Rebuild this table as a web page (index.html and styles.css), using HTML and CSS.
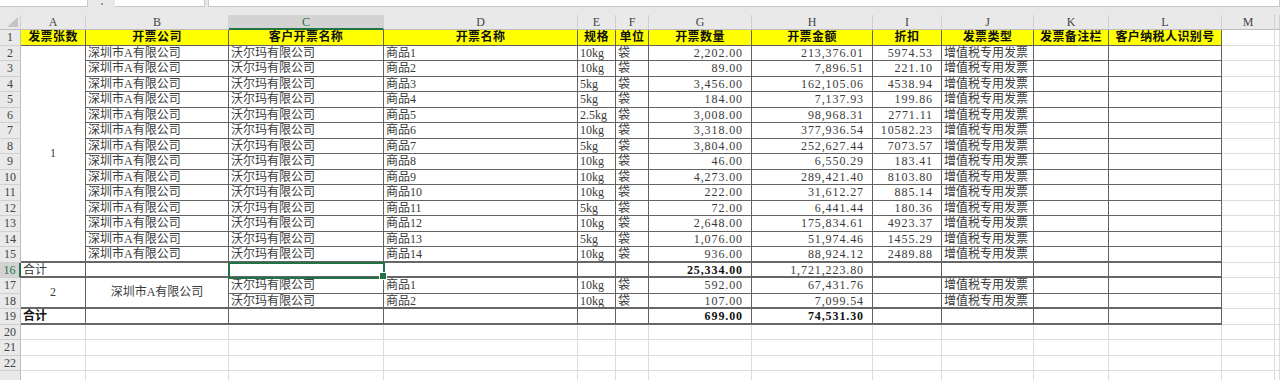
FILE: index.html
```html
<!DOCTYPE html>
<html lang="zh-CN">
<head>
<meta charset="utf-8">
<title>发票</title>
<link rel="stylesheet" href="styles.css">
</head>
<body>
<div class="topbar">
  <div class="box namebox"></div>
  <div class="sep"><span class="dot"></span></div>
  <div class="box fxbox"></div>
  <div class="box formula"></div>
</div>
<div class="sheet">
  <!-- column headers -->
  <div class="h corner"><span class="tri"></span></div>
  <div class="h">A</div><div class="h">B</div><div class="h hs">C</div><div class="h">D</div><div class="h">E</div><div class="h">F</div><div class="h">G</div><div class="h">H</div><div class="h">I</div><div class="h">J</div><div class="h">K</div><div class="h">L</div><div class="h">M</div><div class="h"></div>

  <!-- row 1 -->
  <div class="rh">1</div>
  <div class="c t y">发票张数</div><div class="c t y">开票公司</div><div class="c t y">客户开票名称</div><div class="c t y">开票名称</div><div class="c t y">规格</div><div class="c t y">单位</div><div class="c t y">开票数量</div><div class="c t y">开票金额</div><div class="c t y">折扣</div><div class="c t y">发票类型</div><div class="c t y">发票备注栏</div><div class="c t y">客户纳税人识别号</div><div class="c"></div><div class="c"></div>

  <!-- row 2 -->
  <div class="rh">2</div>
  <div class="c t m1 ctr tk">1</div>
  <div class="c t">深圳市A有限公司</div><div class="c t">沃尔玛有限公司</div><div class="c t">商品1</div><div class="c t">10kg</div><div class="c t">袋</div><div class="c t n">2,202.00</div><div class="c t n">213,376.01</div><div class="c t n">5974.53</div><div class="c t">增值税专用发票</div><div class="c t"></div><div class="c t"></div><div class="c"></div><div class="c"></div>

  <div class="rh">3</div>
  <div class="c t">深圳市A有限公司</div><div class="c t">沃尔玛有限公司</div><div class="c t">商品2</div><div class="c t">10kg</div><div class="c t">袋</div><div class="c t n">89.00</div><div class="c t n">7,896.51</div><div class="c t n">221.10</div><div class="c t">增值税专用发票</div><div class="c t"></div><div class="c t"></div><div class="c"></div><div class="c"></div>

  <div class="rh">4</div>
  <div class="c t">深圳市A有限公司</div><div class="c t">沃尔玛有限公司</div><div class="c t">商品3</div><div class="c t">5kg</div><div class="c t">袋</div><div class="c t n">3,456.00</div><div class="c t n">162,105.06</div><div class="c t n">4538.94</div><div class="c t">增值税专用发票</div><div class="c t"></div><div class="c t"></div><div class="c"></div><div class="c"></div>

  <div class="rh">5</div>
  <div class="c t">深圳市A有限公司</div><div class="c t">沃尔玛有限公司</div><div class="c t">商品4</div><div class="c t">5kg</div><div class="c t">袋</div><div class="c t n">184.00</div><div class="c t n">7,137.93</div><div class="c t n">199.86</div><div class="c t">增值税专用发票</div><div class="c t"></div><div class="c t"></div><div class="c"></div><div class="c"></div>

  <div class="rh">6</div>
  <div class="c t">深圳市A有限公司</div><div class="c t">沃尔玛有限公司</div><div class="c t">商品5</div><div class="c t">2.5kg</div><div class="c t">袋</div><div class="c t n">3,008.00</div><div class="c t n">98,968.31</div><div class="c t n">2771.11</div><div class="c t">增值税专用发票</div><div class="c t"></div><div class="c t"></div><div class="c"></div><div class="c"></div>

  <div class="rh">7</div>
  <div class="c t">深圳市A有限公司</div><div class="c t">沃尔玛有限公司</div><div class="c t">商品6</div><div class="c t">10kg</div><div class="c t">袋</div><div class="c t n">3,318.00</div><div class="c t n">377,936.54</div><div class="c t n">10582.23</div><div class="c t">增值税专用发票</div><div class="c t"></div><div class="c t"></div><div class="c"></div><div class="c"></div>

  <div class="rh">8</div>
  <div class="c t">深圳市A有限公司</div><div class="c t">沃尔玛有限公司</div><div class="c t">商品7</div><div class="c t">5kg</div><div class="c t">袋</div><div class="c t n">3,804.00</div><div class="c t n">252,627.44</div><div class="c t n">7073.57</div><div class="c t">增值税专用发票</div><div class="c t"></div><div class="c t"></div><div class="c"></div><div class="c"></div>

  <div class="rh">9</div>
  <div class="c t">深圳市A有限公司</div><div class="c t">沃尔玛有限公司</div><div class="c t">商品8</div><div class="c t">10kg</div><div class="c t">袋</div><div class="c t n">46.00</div><div class="c t n">6,550.29</div><div class="c t n">183.41</div><div class="c t">增值税专用发票</div><div class="c t"></div><div class="c t"></div><div class="c"></div><div class="c"></div>

  <div class="rh">10</div>
  <div class="c t">深圳市A有限公司</div><div class="c t">沃尔玛有限公司</div><div class="c t">商品9</div><div class="c t">10kg</div><div class="c t">袋</div><div class="c t n">4,273.00</div><div class="c t n">289,421.40</div><div class="c t n">8103.80</div><div class="c t">增值税专用发票</div><div class="c t"></div><div class="c t"></div><div class="c"></div><div class="c"></div>

  <div class="rh">11</div>
  <div class="c t">深圳市A有限公司</div><div class="c t">沃尔玛有限公司</div><div class="c t">商品10</div><div class="c t">10kg</div><div class="c t">袋</div><div class="c t n">222.00</div><div class="c t n">31,612.27</div><div class="c t n">885.14</div><div class="c t">增值税专用发票</div><div class="c t"></div><div class="c t"></div><div class="c"></div><div class="c"></div>

  <div class="rh">12</div>
  <div class="c t">深圳市A有限公司</div><div class="c t">沃尔玛有限公司</div><div class="c t">商品11</div><div class="c t">5kg</div><div class="c t">袋</div><div class="c t n">72.00</div><div class="c t n">6,441.44</div><div class="c t n">180.36</div><div class="c t">增值税专用发票</div><div class="c t"></div><div class="c t"></div><div class="c"></div><div class="c"></div>

  <div class="rh">13</div>
  <div class="c t">深圳市A有限公司</div><div class="c t">沃尔玛有限公司</div><div class="c t">商品12</div><div class="c t">10kg</div><div class="c t">袋</div><div class="c t n">2,648.00</div><div class="c t n">175,834.61</div><div class="c t n">4923.37</div><div class="c t">增值税专用发票</div><div class="c t"></div><div class="c t"></div><div class="c"></div><div class="c"></div>

  <div class="rh">14</div>
  <div class="c t">深圳市A有限公司</div><div class="c t">沃尔玛有限公司</div><div class="c t">商品13</div><div class="c t">5kg</div><div class="c t">袋</div><div class="c t n">1,076.00</div><div class="c t n">51,974.46</div><div class="c t n">1455.29</div><div class="c t">增值税专用发票</div><div class="c t"></div><div class="c t"></div><div class="c"></div><div class="c"></div>

  <div class="rh">15</div>
  <div class="c t tk">深圳市A有限公司</div><div class="c t tk">沃尔玛有限公司</div><div class="c t tk">商品14</div><div class="c t tk">10kg</div><div class="c t tk">袋</div><div class="c t tk n">936.00</div><div class="c t tk n">88,924.12</div><div class="c t tk n">2489.88</div><div class="c t tk">增值税专用发票</div><div class="c t tk"></div><div class="c t tk"></div><div class="c"></div><div class="c"></div>

  <!-- row 16 -->
  <div class="rh rs">16</div>
  <div class="c t tk">合计</div><div class="c t tk"></div><div class="c t tk sel"></div><div class="c t tk"></div><div class="c t tk"></div><div class="c t tk"></div><div class="c t tk n b">25,334.00</div><div class="c t tk n">1,721,223.80</div><div class="c t tk"></div><div class="c t tk"></div><div class="c t tk"></div><div class="c t tk"></div><div class="c"></div><div class="c"></div>

  <!-- row 17 -->
  <div class="rh">17</div>
  <div class="c t m2 ctr tk">2</div><div class="c t m2 ctr tk">深圳市A有限公司</div>
  <div class="c t">沃尔玛有限公司</div><div class="c t">商品1</div><div class="c t">10kg</div><div class="c t">袋</div><div class="c t n">592.00</div><div class="c t n">67,431.76</div><div class="c t"></div><div class="c t">增值税专用发票</div><div class="c t"></div><div class="c t"></div><div class="c"></div><div class="c"></div>

  <div class="rh">18</div>
  <div class="c t tk">沃尔玛有限公司</div><div class="c t tk">商品2</div><div class="c t tk">10kg</div><div class="c t tk">袋</div><div class="c t tk n">107.00</div><div class="c t tk n">7,099.54</div><div class="c t tk"></div><div class="c t tk">增值税专用发票</div><div class="c t tk"></div><div class="c t tk"></div><div class="c"></div><div class="c"></div>

  <!-- row 19 -->
  <div class="rh">19</div>
  <div class="c t tk b">合计</div><div class="c t tk"></div><div class="c t tk"></div><div class="c t tk"></div><div class="c t tk"></div><div class="c t tk"></div><div class="c t tk n b">699.00</div><div class="c t tk n b">74,531.30</div><div class="c t tk"></div><div class="c t tk"></div><div class="c t tk"></div><div class="c t tk"></div><div class="c"></div><div class="c"></div>

  <div class="rh">20</div><div class="c"></div><div class="c"></div><div class="c"></div><div class="c"></div><div class="c"></div><div class="c"></div><div class="c"></div><div class="c"></div><div class="c"></div><div class="c"></div><div class="c"></div><div class="c"></div><div class="c"></div><div class="c"></div>
  <div class="rh">21</div><div class="c"></div><div class="c"></div><div class="c"></div><div class="c"></div><div class="c"></div><div class="c"></div><div class="c"></div><div class="c"></div><div class="c"></div><div class="c"></div><div class="c"></div><div class="c"></div><div class="c"></div><div class="c"></div>
  <div class="rh">22</div><div class="c"></div><div class="c"></div><div class="c"></div><div class="c"></div><div class="c"></div><div class="c"></div><div class="c"></div><div class="c"></div><div class="c"></div><div class="c"></div><div class="c"></div><div class="c"></div><div class="c"></div><div class="c"></div>
  <div class="rh"></div><div class="c"></div><div class="c"></div><div class="c"></div><div class="c"></div><div class="c"></div><div class="c"></div><div class="c"></div><div class="c"></div><div class="c"></div><div class="c"></div><div class="c"></div><div class="c"></div><div class="c"></div><div class="c"></div>
</div>
</body>
</html>
```

FILE: styles.css
```css
* { box-sizing: border-box; }
html, body { margin: 0; padding: 0; }
body {
  width: 1280px;
  height: 380px;
  overflow: hidden;
  background: #ffffff;
  font-family: "Liberation Serif", "Noto Sans CJK SC", serif;
  font-size: 12px;
  color: #3a3a3a;
}

.topbar {
  height: 15px;
  background: #e8e8e8;
  display: flex;
  align-items: flex-start;
}
.box {
  height: 7px;
  background: #ffffff;
  border-bottom: 1px solid #c8c8c8;
  border-right: 1px solid #c8c8c8;
}
.namebox { width: 88px; }
.sep {
  width: 27px;
  height: 7px;
  display: flex;
  justify-content: center;
  align-items: flex-end;
}
.dot { width: 2px; height: 2px; background: #9a9a9a; margin-bottom: 2px; }
.fxbox { width: 90px; }
.formula { flex: 1; margin-left: 3px; border-left: 1px solid #c8c8c8; }

.sheet {
  display: grid;
  grid-template-columns: 21px 65px 143px 155px 194px 38px 33px 103px 121px 69px 92px 75px 113px 53px 1fr;
  grid-template-rows: 15px repeat(11, 16px 15px) 16px;
  height: 365px;
  overflow: hidden;
}

.h {
  background: #e9e9e9;
  border-right: 1px solid #d0d0d0;
  border-bottom: 1px solid #bdbdbd;
  text-align: center;
  line-height: 15px;
  color: #444;
  font-size: 12px;
}
.hs {
  background: #d3d3d3;
  color: #217346;
  border-bottom: 2px solid #217346;
}
.corner {
  display: flex;
  justify-content: flex-end;
  align-items: flex-end;
  padding: 0 2px 2px 0;
}
.tri {
  width: 11px;
  height: 10px;
  background: #c4c4c4;
  clip-path: polygon(100% 0, 100% 100%, 0 100%);
}

.rh {
  background: #e9e9e9;
  border-right: 1px solid #bdbdbd;
  border-bottom: 1px solid #d0d0d0;
  text-align: center;
  color: #444;
  line-height: 15px;
  font-size: 12px;
}
.rs {
  background: #d3d3d3;
  color: #217346;
  border-right: 2px solid #217346;
}

.c {
  border-right: 1px solid #dcdcdc;
  border-bottom: 1px solid #dcdcdc;
  padding: 0 2px;
  white-space: nowrap;
  overflow: hidden;
  line-height: 15px;
}
.t {
  border-right-color: #626262;
  border-bottom-color: #626262;
}
.tk { border-bottom: 2px solid #666666; }
.y {
  background: #ffff00;
  font-weight: 700;
  text-align: center;
  color: #111;
  letter-spacing: 0.4px;
  padding: 0;
}
.n {
  text-align: right;
  padding-right: 8px;
  letter-spacing: 0.9px;
}
.b { font-weight: 700; color: #111; }
.ctr {
  display: flex;
  align-items: center;
  justify-content: center;
}
.m1 { grid-row: span 14; }
.m2 { grid-row: span 2; }

.sel {
  position: relative;
  overflow: visible;
  outline: 2px solid #217346;
  outline-offset: -1px;
}
.sel::after {
  content: "";
  position: absolute;
  right: -4px;
  bottom: -4px;
  width: 6px;
  height: 6px;
  background: #217346;
  border: 1px solid #ffffff;
}
```
